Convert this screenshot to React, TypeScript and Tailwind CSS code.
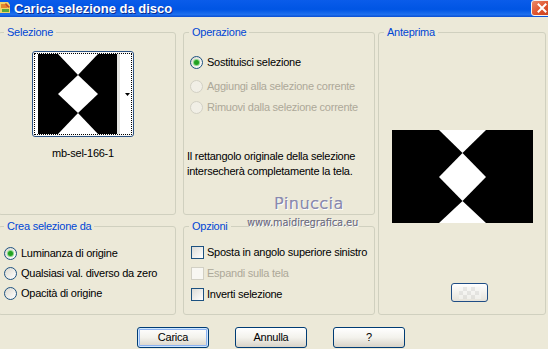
import React from 'react';

function Radio({ checked, disabled }: { checked?: boolean; disabled?: boolean }) {
  return (
    <span
      className={`w-[13px] h-[13px] rounded-full border shrink-0 flex items-center justify-center ${
        disabled ? 'border-[#D2D0C4] bg-[#F1EFE6]' : 'border-[#1C5180] bg-linear-to-br from-[#DCD9CF] to-white'
      }`}
    >
      {checked && <span className="w-[5px] h-[5px] rounded-full bg-[#21A121] shadow-[0_0_0_1px_#8CD88C]" />}
    </span>
  );
}

function Check({ disabled }: { disabled?: boolean }) {
  return (
    <span
      className={`w-[13px] h-[13px] border shrink-0 ${
        disabled ? 'border-[#D2D0C4] bg-[#F8F7F2]' : 'border-[#1C5180] bg-linear-to-br from-[#DCDCD7] to-white'
      }`}
    />
  );
}

function Row({ label, control, disabled, gap }: { label: string; control: React.ReactNode; disabled?: boolean; gap: string }) {
  return (
    <div className={`flex items-center h-[13px] ${gap}`}>
      {control}
      <span className={`leading-[13px] whitespace-nowrap ${disabled ? 'text-[#ACA899]' : 'text-black'}`}>{label}</span>
    </div>
  );
}

function Group({ title, className, children }: { title: string; className: string; children?: React.ReactNode }) {
  return (
    <fieldset className={`border border-[#D0D0BF] rounded-[3px] min-w-0 shrink-0 ${className}`}>
      <legend className="ml-[5px] px-[3px] text-[#0046D5] leading-[13px]">{title}</legend>
      {children}
    </fieldset>
  );
}

function Btn({ label, def }: { label: string; def?: boolean }) {
  return (
    <button
      className={`w-[72px] h-[21px] rounded-[3px] border border-[#003C74] bg-linear-to-b from-white via-[#F3F2EC] to-[#D8D3C7] text-black leading-[19px] ${
        def ? 'shadow-[inset_0_0_0_1px_#CEE7FF,inset_0_0_0_2px_#8DB2F0]' : ''
      }`}
    >
      {label}
    </button>
  );
}

function Shape({ w, h, small }: { w: number; h: number; small?: boolean }) {
  // selection mask: black field with white hourglass / diamond column
  const a = small ? 20 : 47;
  const b = small ? 60 : 94;
  const m = (a + b) / 2;
  const y1 = small ? 21 : 23;
  const y2 = small ? 40 : 47;
  const y3 = small ? 59 : 71;
  return (
    <svg width={w} height={h} viewBox={`0 0 ${w} ${h}`} className="block">
      <rect width={w} height={h} fill="#000" />
      <polygon points={`${a},0 ${b},0 ${m},${y1}`} fill="#fff" />
      <polygon points={`${m},${y1} ${b},${y2} ${m},${y3} ${a},${y2}`} fill="#fff" />
      <polygon points={`${m},${y3} ${b},${h} ${a},${h}`} fill="#fff" />
    </svg>
  );
}

export default function App() {
  return (
    <div className="w-[548px] h-[349px] bg-[#ECE9D8] overflow-hidden relative font-['Liberation_Sans',Arial,sans-serif] text-[11px] tracking-[-0.25px] text-black">
      {/* title bar */}
      <div className="h-[17px] flex items-start bg-[linear-gradient(to_bottom,#0A5CEA_0%,#0055E4_55%,#1F70EE_85%,#0B4FD2_100%)]">
        <svg width="11" height="14" viewBox="0 0 11 14" className="mt-[1px] shrink-0">
          <path d="M0 1 L8 1 L10 4 L10 12 L0 12 Z" fill="#F1D46A" />
          <path d="M1 3 L7 3 L7 7 L1 7 Z" fill="#E2872E" />
          <path d="M2 8 L9 8 L9 11 L2 11 Z" fill="#5DA83B" />
          <path d="M6 2 L10 6 L8 7 L5 3 Z" fill="#C84B2A" />
        </svg>
        <span className="ml-[3px] mt-[1px] text-white font-bold text-[13px] leading-[15px] tracking-normal [text-shadow:1px_1px_0_#0C2A8E]">
          Carica selezione da disco
        </span>
        <div className="ml-auto mr-[-4px] w-[21px] h-[16px] rounded-[3px] border border-[#F4F4F4] bg-linear-to-br from-[#E88A6A] via-[#E0542E] to-[#C7401E] flex items-center justify-center">
          <svg width="10" height="10" viewBox="0 0 10 10">
            <path d="M1.5 1.5 L8.5 8.5 M8.5 1.5 L1.5 8.5" stroke="#fff" strokeWidth="2" strokeLinecap="square" />
          </svg>
        </div>
      </div>

      {/* groups */}
      <div className="flex pt-[9px]">
        <div className="flex flex-col gap-[5px] w-[178px] -ml-[2px] shrink-0">
          <Group title="Selezione" className="h-[189px]">
            <div className="ml-[33px] mt-[12px] w-[102px] flex flex-col items-center">
              <div className="w-[102px] h-[86px] rounded-[3px] border border-[#2C5283] bg-[#F7F7F4] p-[1px]">
                <div className="h-[82px] border border-dotted border-black flex bg-white">
                  <div className="ml-[3px]">
                    <Shape w={79} h={80} small />
                  </div>
                  <div className="flex-1 flex items-center justify-end pr-[1px] border-l-[3px] border-[#E4E4E0]">
                    <svg width="5" height="3" viewBox="0 0 5 3">
                      <path d="M0 0 L5 0 L2.5 3 Z" fill="#000" />
                    </svg>
                  </div>
                </div>
              </div>
              <span className="mt-[10px] leading-[13px]">mb-sel-166-1</span>
            </div>
          </Group>
          <Group title="Crea selezione da" className="h-[95px]">
            <div className="mt-[14px] pl-[5px] flex flex-col gap-[7px]">
              <Row label="Luminanza di origine" control={<Radio checked />} gap="gap-[4px]" />
              <Row label="Qualsiasi val. diverso da zero" control={<Radio />} gap="gap-[4px]" />
              <Row label="Opacità di origine" control={<Radio />} gap="gap-[4px]" />
            </div>
          </Group>
        </div>

        <div className="flex flex-col gap-[5px] w-[192px] ml-[7px] shrink-0">
          <Group title="Operazione" className="h-[189px]">
            <div className="mt-[17px] pl-[6px] flex flex-col">
              <Row label="Sostituisci selezione" control={<Radio checked />} gap="gap-[4px]" />
              <div className="mt-[11px]">
                <Row label="Aggiungi alla selezione corrente" control={<Radio disabled />} disabled gap="gap-[4px]" />
              </div>
              <div className="mt-[8px]">
                <Row label="Rimuovi dalla selezione corrente" control={<Radio disabled />} disabled gap="gap-[4px]" />
              </div>
            </div>
            <p className="mt-[35px] pl-[3px] leading-[15px]">
              Il rettangolo originale della selezione
              <br />
              intersecherà completamente la tela.
            </p>
          </Group>
          <Group title="Opzioni" className="h-[95px]">
            <div className="mt-[13px] pl-[7px] flex flex-col gap-[8px]">
              <Row label="Sposta in angolo superiore sinistro" control={<Check />} gap="gap-[3px]" />
              <Row label="Espandi sulla tela" control={<Check disabled />} disabled gap="gap-[3px]" />
              <Row label="Inverti selezione" control={<Check />} gap="gap-[3px]" />
            </div>
          </Group>
        </div>

        <Group title="Anteprima" className="w-[168px] h-[289px] ml-[3px]">
          <div className="flex flex-col items-center">
            <div className="mt-[91px]">
              <Shape w={141} h={93} />
            </div>
            <button className="self-start ml-[72px] mt-[60px] w-[37px] h-[19px] rounded-[3px] border border-[#1F4D85] bg-linear-to-b from-white to-[#E6E3DA] flex items-center justify-center">
              <svg width="22" height="12" viewBox="0 0 22 12" className="opacity-60">
                <rect width="22" height="12" fill="#F6F6F4" />
                <rect x="4" y="0" width="4" height="4" fill="#DCDCDA" />
                <rect x="12" y="0" width="4" height="4" fill="#DCDCDA" />
                <rect x="0" y="4" width="4" height="4" fill="#DCDCDA" />
                <rect x="8" y="4" width="4" height="4" fill="#DCDCDA" />
                <rect x="16" y="4" width="4" height="4" fill="#DCDCDA" />
                <rect x="4" y="8" width="4" height="4" fill="#DCDCDA" />
                <rect x="12" y="8" width="4" height="4" fill="#DCDCDA" />
              </svg>
            </button>
          </div>
        </Group>
      </div>

      {/* dialog buttons */}
      <div className="flex gap-[26px] pl-[137px] pt-[12px]">
        <Btn label="Carica" def />
        <Btn label="Annulla" />
        <Btn label="?" />
      </div>

      {/* watermark over the dialog */}
      <div className="absolute left-[274px] top-[195px] font-['DejaVu_Sans',sans-serif] text-[16px] leading-[18px] tracking-[0.5px] text-[#8A8AAE] [text-shadow:1px_1px_0_#FFFFFF,0.5px_0_0_#8A8AAE]">
        Pinuccia
      </div>
      <div className="absolute left-[247px] top-[217px] font-['DejaVu_Sans',sans-serif] text-[9.7px] leading-[12px] tracking-normal text-[#737385] [text-shadow:1px_1px_0_#FFFFFF,0.4px_0_0_#737385]">
        www.maidiregrafica.eu
      </div>
    </div>
  );
}
